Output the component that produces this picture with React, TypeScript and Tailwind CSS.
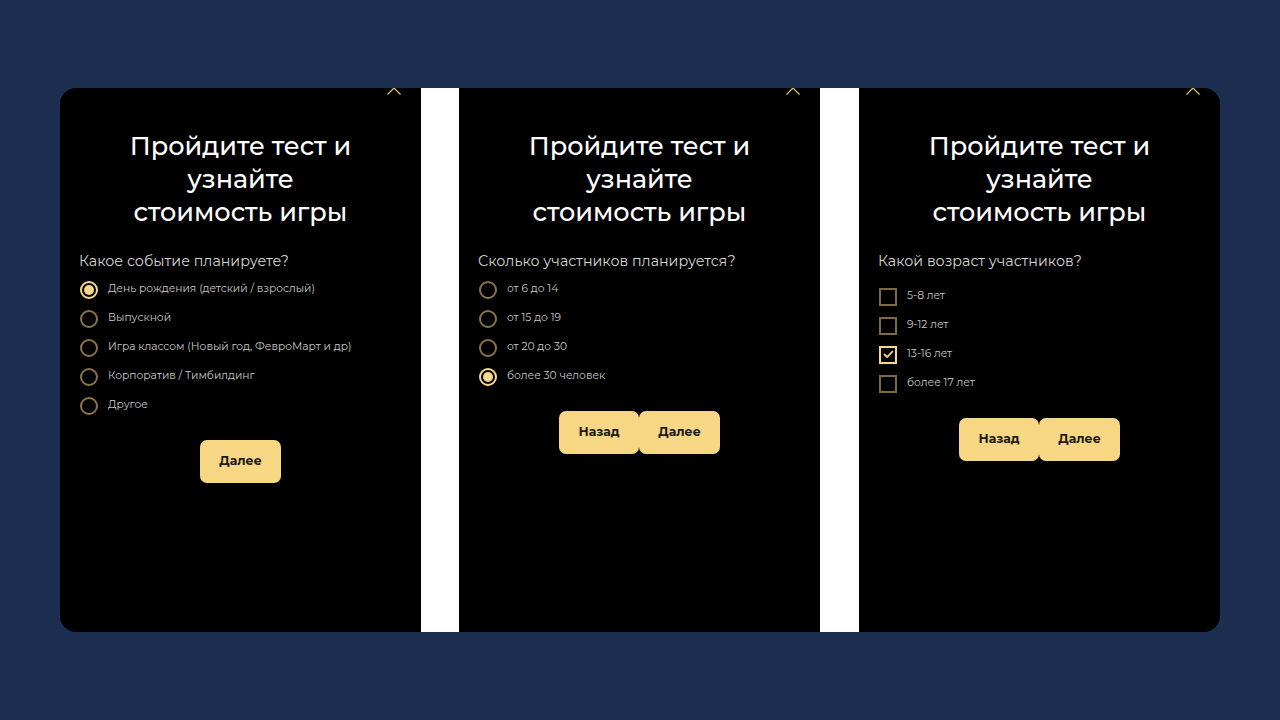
import { useState } from 'react'

type Step = {
  question: string
  kind: 'radio' | 'check'
  options: string[]
  selected: number[]
  back: boolean
}

const steps: Step[] = [
  {
    question: 'Какое событие планируете?',
    kind: 'radio',
    options: [
      'День рождения (детский / взрослый)',
      'Выпускной',
      'Игра классом (Новый год, ФевроМарт и др)',
      'Корпоратив / Тимбилдинг',
      'Другое',
    ],
    selected: [0],
    back: false,
  },
  {
    question: 'Сколько участников планируется?',
    kind: 'radio',
    options: ['от 6 до 14', 'от 15 до 19', 'от 20 до 30', 'более 30 человек'],
    selected: [3],
    back: true,
  },
  {
    question: 'Какой возраст участников?',
    kind: 'check',
    options: ['5-8 лет', '9-12 лет', '13-16 лет', 'более 17 лет'],
    selected: [2],
    back: true,
  },
]

const font = { fontFamily: '"Montserrat", "Inter", "Noto Sans", sans-serif' }

function Radio({ on }: { on: boolean }) {
  return (
    <span
      className={
        'flex h-[18px] w-[18px] shrink-0 items-center justify-center rounded-full border-2 ' +
        (on ? 'border-[#f6d88c]' : 'border-[#8a7447]')
      }
    >
      {on && <span className="h-[10px] w-[10px] rounded-full bg-[#f6d88c]" />}
    </span>
  )
}

function Check({ on }: { on: boolean }) {
  return (
    <span
      className={
        'flex h-[18px] w-[18px] shrink-0 items-center justify-center border-2 ' +
        (on ? 'border-[#f6d88c]' : 'border-[#7d6a43]')
      }
    >
      {on && (
        <svg width="11" height="9" viewBox="0 0 11 9" fill="none">
          <path d="M1.5 4.5L4.2 7.2L9.5 1.5" stroke="#f6d88c" strokeWidth="1.8" strokeLinecap="round" strokeLinejoin="round" />
        </svg>
      )}
    </span>
  )
}

function QuizPanel({ step }: { step: Step }) {
  const [picked, setPicked] = useState<number[]>(step.selected)
  const toggle = (i: number) => {
    if (step.kind === 'radio') setPicked([i])
    else setPicked(picked.includes(i) ? picked.filter((x) => x !== i) : [...picked, i])
  }

  return (
    <div className="relative w-[361px] shrink-0 bg-black pt-[41px]" style={font}>
      <svg
        className="absolute right-[19px] top-[-2px]"
        width="16"
        height="10"
        viewBox="0 0 16 10"
        fill="none"
      >
        <path d="M1.5 8.5L8 2L14.5 8.5" stroke="#d9bd7e" strokeWidth="1.3" />
      </svg>

      <h2 className="text-center text-[25.5px] font-medium leading-[33px] text-white">
        Пройдите тест и
        <br />
        узнайте
        <br />
        стоимость игры
      </h2>

      <div className="mt-[23px] px-[19px]">
        <p className="text-[14.3px] leading-[20px] text-[#d6d6d6]">{step.question}</p>
        <div className={step.kind === 'check' ? 'mt-[11px]' : 'mt-[4px]'}>
          {step.options.map((opt, i) => (
            <div
              key={opt}
              onClick={() => toggle(i)}
              className="flex h-[29px] cursor-pointer items-center gap-[10px] pl-[1px]"
            >
              {step.kind === 'radio' ? <Radio on={picked.includes(i)} /> : <Check on={picked.includes(i)} />}
              <span className="text-[10.7px] text-[#c9c9c9]">{opt}</span>
            </div>
          ))}
        </div>
      </div>

      <div className="mt-[20px] flex justify-center">
        {step.back && (
          <button className="h-[43px] w-[80px] rounded-[7px] bg-[#f8d784] text-[12.5px] font-bold text-[#1a1a1a]">
            Назад
          </button>
        )}
        <button className="h-[43px] w-[81px] rounded-[7px] bg-[#f8d784] text-[12.5px] font-bold text-[#1a1a1a]">
          Далее
        </button>
      </div>
    </div>
  )
}

export default function App() {
  return (
    <div className="h-[720px] w-full bg-[#1b2e50] px-[60px] pt-[88px]">
      <div className="flex h-[544px] overflow-hidden rounded-[16px]">
        <QuizPanel step={steps[0]} />
        <div className="w-[38px] shrink-0 bg-white" />
        <QuizPanel step={steps[1]} />
        <div className="w-[39px] shrink-0 bg-white" />
        <QuizPanel step={steps[2]} />
      </div>
    </div>
  )
}
